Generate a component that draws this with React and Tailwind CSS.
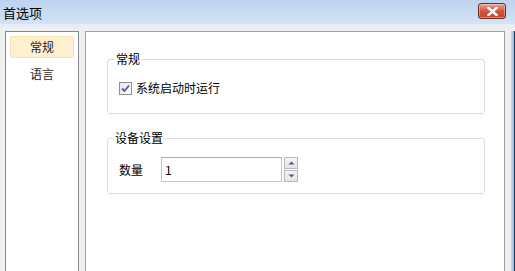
export default function App() {
  const font = { fontFamily: '"Noto Sans CJK SC", "Noto Sans", sans-serif' };
  return (
    <div
      className="w-[515px] h-[271px] overflow-hidden flex flex-col bg-[#f0f0f0] text-[12px] text-[#1e1e1e]"
      style={font}
    >
      {/* title bar */}
      <div className="h-[24px] flex items-center justify-between pl-[3px] pr-[9px] bg-gradient-to-b from-[#bdd3ee] to-[#d4e3f4]">
        <span className="text-[13px] leading-none text-black">首选项</span>
        <div className="w-[28px] h-[16px] mt-[-2px] rounded-[3px] border border-[#6b2a22] bg-gradient-to-b from-[#e8a493] via-[#d2553d] to-[#c3442c] flex items-center justify-center shadow-[inset_0_0_0_1px_rgba(255,255,255,0.35)]">
          <svg width="11" height="9" viewBox="0 0 11 9">
            <path d="M1.5 1 L9.5 8 M9.5 1 L1.5 8" stroke="#fff" strokeWidth="2.4" strokeLinecap="square" />
          </svg>
        </div>
      </div>
      <div className="h-[7px] bg-gradient-to-b from-[#e4ecf6] to-[#f0f0f0]" />

      {/* body */}
      <div className="flex-1 flex min-h-0">
        <div className="flex-1 flex gap-[6px] pl-[5px] min-h-0">
          {/* left nav */}
          <div className="w-[74px] bg-white border-l border-t border-r border-[#828790] pt-[4px] px-[4px] flex flex-col gap-[5px]">
            <div className="h-[22px] rounded-[2px] bg-[#fdf1d1] border border-[#f6e3b1] flex items-center justify-center">
              常规
            </div>
            <div className="h-[22px] flex items-center justify-center">语言</div>
          </div>

          {/* right panel */}
          <div className="flex-1 bg-white border-l border-t border-r border-[#a0a0a0] pl-[21px] pr-[19px] pt-[20px] flex flex-col">
            <fieldset className="border border-[#dcdcdc] rounded-[3px] h-[62px] px-[11px] pb-0 m-0">
              <legend className="px-[1px] ml-[-4px] leading-[14px] text-black">常规</legend>
              <label className="flex items-center gap-[4px] mt-[13px]">
                <span className="w-[13px] h-[13px] border border-[#8f8f8f] bg-gradient-to-br from-[#e6e6e6] to-[#fdfdfd] flex items-center justify-center">
                  <svg width="9" height="9" viewBox="0 0 9 9">
                    <path d="M1 4.5 L3.5 7 L8 1.5" stroke="#4a5f97" strokeWidth="1.8" fill="none" />
                  </svg>
                </span>
                <span className="text-black">系统启动时运行</span>
              </label>
            </fieldset>

            <fieldset className="border border-[#dcdcdc] rounded-[3px] h-[63px] px-[10px] m-0 mt-[17px]">
              <legend className="px-[1px] ml-[-4px] leading-[14px] text-black">设备设置</legend>
              <div className="flex items-center mt-[12px]">
                <span className="w-[43px] pl-[1px] text-black">数量</span>
                <div className="w-[121px] h-[25px] border border-[#c5c5c5] border-t-[#abadb3] flex items-center pl-[3px] text-black">
                  1
                </div>
                <div className="ml-[2px] flex flex-col gap-[1px]">
                  <div className="w-[14px] h-[12px] border border-[#b8b8b8] bg-gradient-to-b from-[#f6f6f6] to-[#e3e3e3] flex items-center justify-center">
                    <svg width="7" height="4" viewBox="0 0 7 4"><path d="M0.5 3.5 L3.5 0.5 L6.5 3.5 Z" fill="#4c5b80" /></svg>
                  </div>
                  <div className="w-[14px] h-[12px] border border-[#b8b8b8] bg-gradient-to-b from-[#f6f6f6] to-[#e3e3e3] flex items-center justify-center">
                    <svg width="7" height="4" viewBox="0 0 7 4"><path d="M0.5 0.5 L3.5 3.5 L6.5 0.5 Z" fill="#4c5b80" /></svg>
                  </div>
                </div>
              </div>
            </fieldset>
          </div>
        </div>

        {/* window right frame */}
        <div className="w-[6px] bg-[#f0f0f0]" />
        <div className="w-[3px] bg-gradient-to-r from-[#c9dcef] to-[#9dbad8]" />
        <div className="w-[1px] bg-[#1d3552]" />
      </div>
    </div>
  );
}
